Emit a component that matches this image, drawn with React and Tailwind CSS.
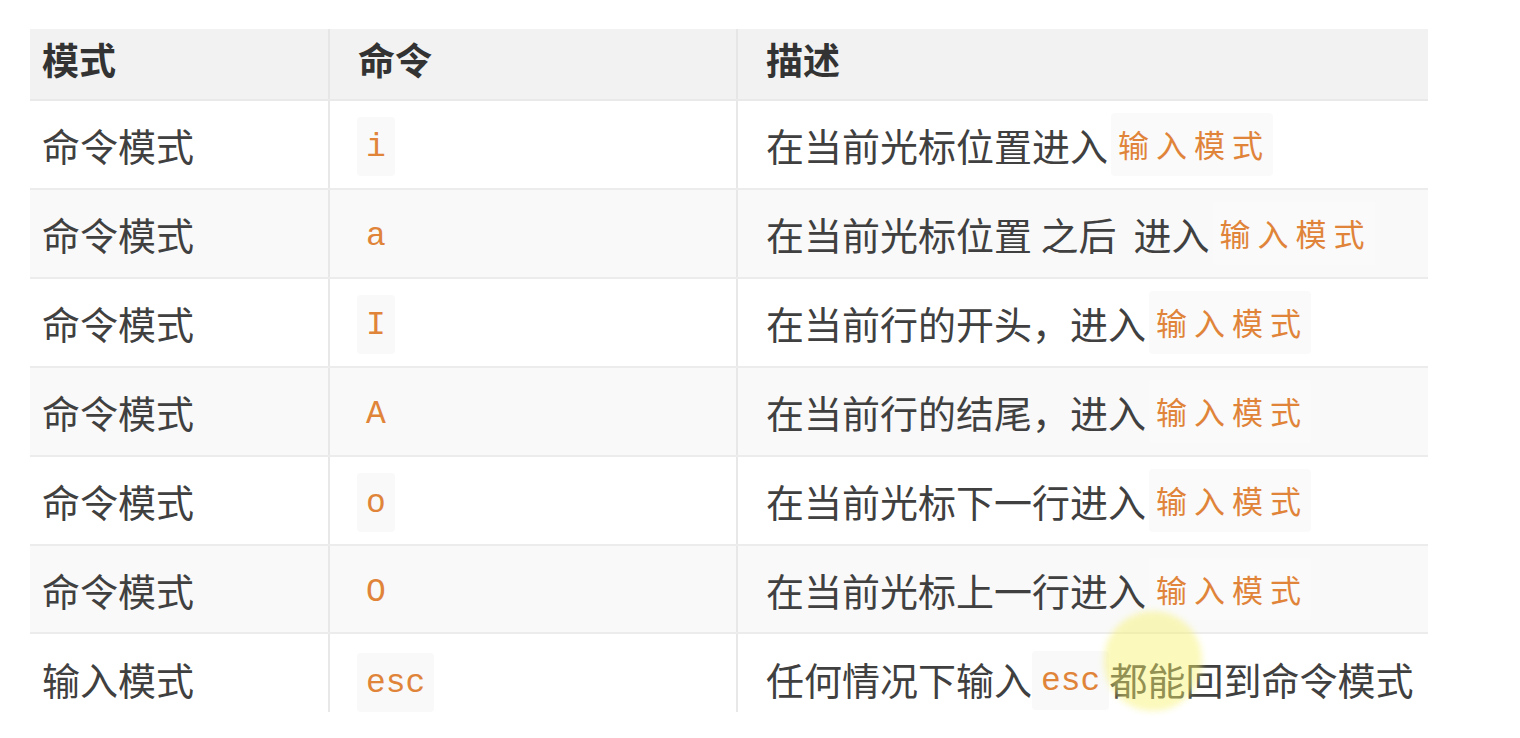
const rows = [
  { mode: '命令模式', cmd: 'i', desc: '在当前光标位置进入' },
  { mode: '命令模式', cmd: 'a', desc: '在当前光标位置 之后  进入' },
  { mode: '命令模式', cmd: 'I', desc: '在当前行的开头，进入' },
  { mode: '命令模式', cmd: 'A', desc: '在当前行的结尾，进入' },
  { mode: '命令模式', cmd: 'o', desc: '在当前光标下一行进入' },
  { mode: '命令模式', cmd: 'O', desc: '在当前光标上一行进入' },
]

const cjk = "font-['Noto_Sans_CJK_SC',sans-serif]"
const mono = "font-['Liberation_Mono','Noto_Sans_CJK_SC',monospace]"

function Code({ children }) {
  return (
    <code className={`${mono} text-[33px] leading-none text-[#e0843a] bg-[#f9f9f9] rounded px-[9px] pt-[14px] pb-[12px]`}>
      {children}
    </code>
  )
}

function ModeTag() {
  return (
    <span className={`${cjk} ml-[3px] text-[31px] tracking-[7px] text-[#e0843a] bg-[#fafafa] rounded pl-[7px] pr-[3px] py-[8px]`}>
      输入模式
    </span>
  )
}

export default function App() {
  return (
    <div className={`relative min-h-screen bg-white pt-[29px] pl-[30px] ${cjk} text-[#404040]`}>
      <div className="w-[1398px]">
        {/* header */}
        <div className="grid grid-cols-[300px_408px_690px] h-[72px] bg-[#f2f2f2] border-b-2 border-[#e9e9e9] text-[37px] font-bold text-[#333]">
          <div className="flex items-center pl-3 pb-2 border-r-2 border-[#e6e6e6]">模式</div>
          <div className="flex items-center pl-7 pb-2 border-r-2 border-[#e6e6e6]">命令</div>
          <div className="flex items-center pl-7 pb-2">描述</div>
        </div>

        {rows.map((r, i) => (
          <div
            key={i}
            className={`grid grid-cols-[300px_408px_690px] ${i === 5 ? 'h-[88px]' : 'h-[89px]'} border-b-2 border-[#ececec] text-[38px] ${i % 2 === 1 ? 'bg-[#f9f9f9]' : 'bg-white'}`}
          >
            <div className="flex items-center pl-3 border-r-2 border-[#e8e8e8]">{r.mode}</div>
            <div className="flex items-center pl-[27px] pt-1 border-r-2 border-[#e8e8e8]">
              <Code>{r.cmd}</Code>
            </div>
            <div className="flex items-center pl-7 whitespace-pre">
              {r.desc}
              <ModeTag />
            </div>
          </div>
        ))}

        {/* last row */}
        <div className="grid grid-cols-[300px_408px_690px] h-[77px] text-[38px] bg-white">
          <div className="flex items-start pt-[16px] pl-3 border-r-2 border-[#e8e8e8]">输入模式</div>
          <div className="flex items-start pt-[19px] pl-[27px] border-r-2 border-[#e8e8e8]">
            <Code>esc</Code>
          </div>
          <div className="flex items-start pt-[16px] pl-7 whitespace-pre">
            任何情况下输入
            <span className="flex items-center h-[57px] pt-1">
              <Code>esc</Code>
            </span>
            都能回到命令模式
          </div>
        </div>
      </div>

      {/* cursor highlight */}
      <div className="absolute left-[1104px] top-[611px] w-[98px] h-[100px] rounded-full bg-[#f7f26a] opacity-45 blur-[3px] pointer-events-none" />
    </div>
  )
}
